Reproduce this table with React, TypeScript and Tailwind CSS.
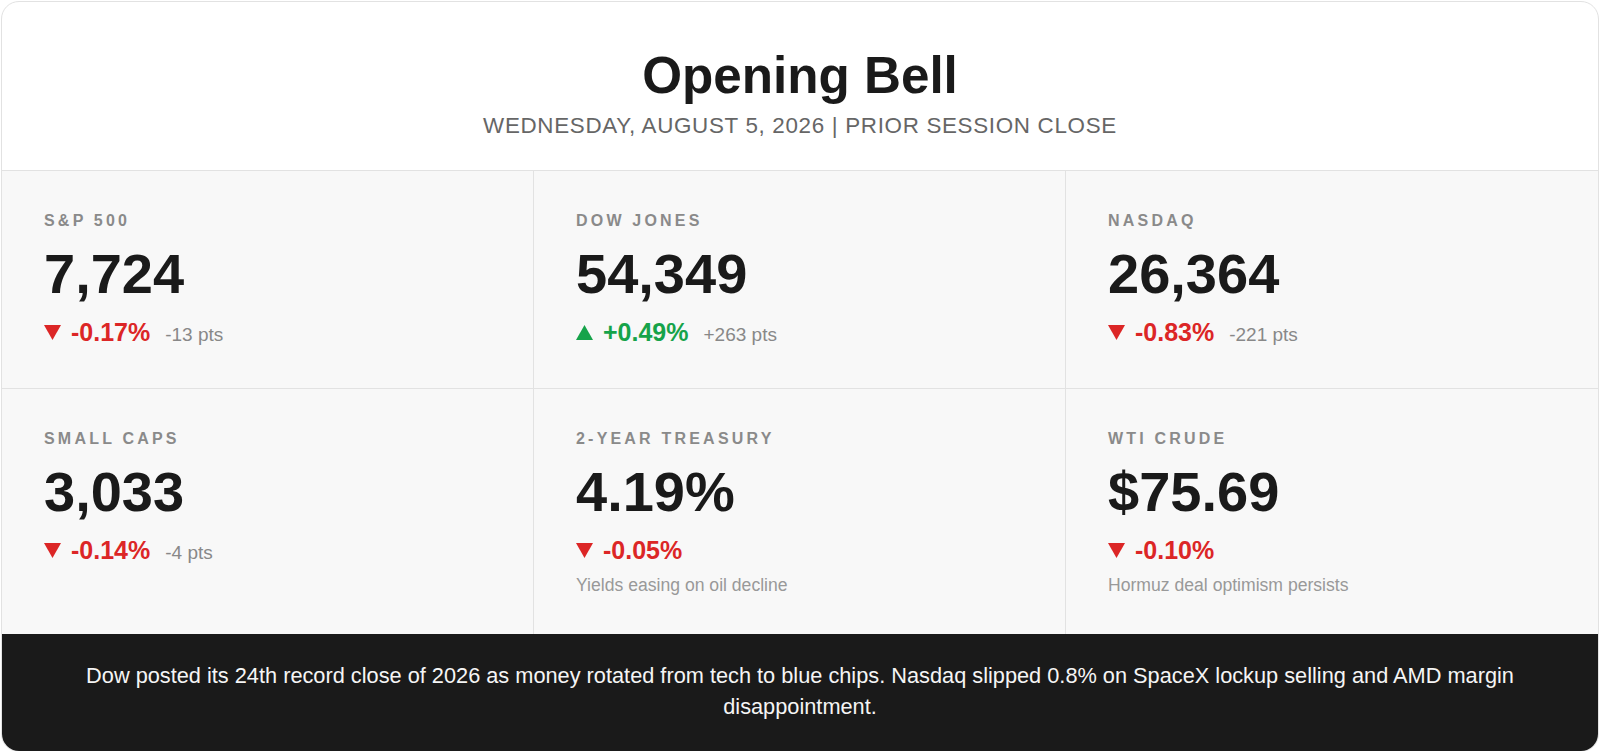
type Quote = {
  label: string
  value: string
  change: string
  pts?: string
  note?: string
  up?: boolean
}

const quotes: Quote[] = [
  { label: "S&P 500", value: "7,724", change: "-0.17%", pts: "-13 pts" },
  { label: "Dow Jones", value: "54,349", change: "+0.49%", pts: "+263 pts", up: true },
  { label: "Nasdaq", value: "26,364", change: "-0.83%", pts: "-221 pts" },
  { label: "Small Caps", value: "3,033", change: "-0.14%", pts: "-4 pts" },
  { label: "2-Year Treasury", value: "4.19%", change: "-0.05%", note: "Yields easing on oil decline" },
  { label: "WTI Crude", value: "$75.69", change: "-0.10%", note: "Hormuz deal optimism persists" },
]

function Arrow({ up }: { up?: boolean }) {
  return (
    <svg width="17" height="15" viewBox="0 0 17 15" className="self-center mr-[10px] shrink-0">
      {up ? (
        <polygon points="8.5,0 17,15 0,15" fill="#16a34a" />
      ) : (
        <polygon points="0,0 17,0 8.5,15" fill="#dc2626" />
      )}
    </svg>
  )
}

function QuoteCell({ q, index }: { q: Quote; index: number }) {
  const col = index % 3
  const row = Math.floor(index / 3)
  return (
    <div
      className={
        "bg-[#f8f8f8] px-[42px] pt-[40px] border-[#e2e2e2] " +
        (q.note ? "pb-[40px] " : "pb-[43px] ") +
        (col < 2 ? "border-r " : "") +
        (row === 0 ? "border-b" : "")
      }
    >
      {/* label */}
      <div className="text-[16px] leading-[20px] font-bold uppercase tracking-[3.2px] text-[#8a8a8a]">
        {q.label}
      </div>
      <div className="mt-[15px] text-[56px] leading-none font-bold text-[#1a1a1a]">{q.value}</div>
      <div className="mt-[18px] flex items-baseline h-[25px]">
        <Arrow up={q.up} />
        <span
          className={
            "text-[25px] leading-none font-bold " + (q.up ? "text-[#16a34a]" : "text-[#dc2626]")
          }
        >
          {q.change}
        </span>
        {q.pts && <span className="ml-[15px] text-[19px] leading-none text-[#888888]">{q.pts}</span>}
      </div>
      {q.note && <div className="mt-[14px] text-[17.6px] leading-none text-[#999999]">{q.note}</div>}
    </div>
  )
}

export default function App() {
  return (
    <div className="min-h-screen bg-white p-px" style={{ fontFamily: '"Liberation Sans", Arial, sans-serif' }}>
      <div className="rounded-[18px] border border-[#e2e2e2] overflow-hidden bg-white">
        {/* Header */}
        <div className="pt-[48px] pb-[32px] text-center border-b border-[#e2e2e2]">
          <h1 className="text-[51.2px] leading-none font-bold text-[#1a1a1a]">Opening Bell</h1>
          <p className="mt-[14px] text-[22.4px] leading-none uppercase tracking-[0.68px] text-[#666666]">
            Wednesday, August 5, 2026 | Prior Session Close
          </p>
        </div>

        {/* Grid */}
        <div className="grid grid-cols-3">
          {quotes.map((q, i) => (
            <QuoteCell key={q.label} q={q} index={i} />
          ))}
        </div>

        {/* Footer */}
        <div className="bg-[#1a1a1a] px-12 pt-[27px] pb-[29px] text-center">
          <p className="text-[21.75px] leading-[30.5px] text-[#f5f5f5]">
            Dow posted its 24th record close of 2026 as money rotated from tech to blue chips. Nasdaq slipped
            0.8% on SpaceX lockup selling and AMD margin disappointment.
          </p>
        </div>
      </div>
    </div>
  )
}
